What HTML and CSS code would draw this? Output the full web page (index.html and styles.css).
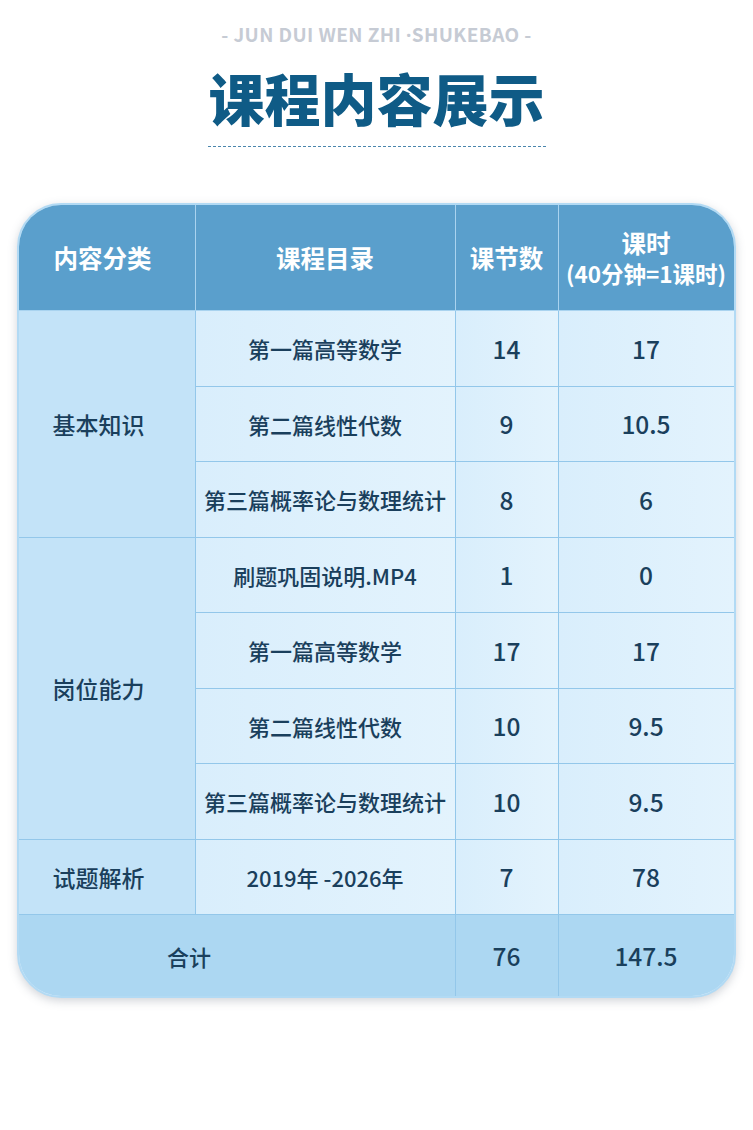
FILE: index.html
```html
<!DOCTYPE html>
<html lang="zh">
<head>
<meta charset="utf-8">
<link rel="stylesheet" href="styles.css">
</head>
<body>
<div class="page">
  <div class="eyebrow">- JUN DUI WEN ZHI <span class="dot">·</span>SHUKEBAO -</div>
  <h1 class="title">课程内容展示</h1>
  <div class="rule"></div>
  <div class="card">
    <div class="grid">
      <div class="hd c1">内容分类</div>
      <div class="hd c2">课程目录</div>
      <div class="hd c3">课节数</div>
      <div class="hd c4"><span>课时</span><span>(40分钟=1课时)</span></div>

      <div class="cat span3">基本知识</div>
      <div class="cell">第一篇高等数学</div><div class="cell num">14</div><div class="cell num last">17</div>
      <div class="cell">第二篇线性代数</div><div class="cell num">9</div><div class="cell num last">10.5</div>
      <div class="cell">第三篇概率论与数理统计</div><div class="cell num">8</div><div class="cell num last">6</div>

      <div class="cat span4">岗位能力</div>
      <div class="cell">刷题巩固说明.MP4</div><div class="cell num">1</div><div class="cell num last">0</div>
      <div class="cell">第一篇高等数学</div><div class="cell num">17</div><div class="cell num last">17</div>
      <div class="cell">第二篇线性代数</div><div class="cell num">10</div><div class="cell num last">9.5</div>
      <div class="cell">第三篇概率论与数理统计</div><div class="cell num">10</div><div class="cell num last">9.5</div>

      <div class="cat">试题解析</div>
      <div class="cell">2019年 -2026年</div><div class="cell num">7</div><div class="cell num last">78</div>

      <div class="tot span2">合计</div>
      <div class="tot num">76</div>
      <div class="tot num last">147.5</div>
    </div>
  </div>
</div>
</body>
</html>
```

FILE: styles.css
```css
* { box-sizing: border-box; }
html, body { margin: 0; padding: 0; background: #ffffff; }
body {
  font-family: "Noto Sans CJK SC", "Noto Sans", sans-serif;
  width: 753px;
  height: 1130px;
  overflow: hidden;
}
.page {
  display: flex;
  flex-direction: column;
  align-items: center;
  padding-top: 20px;
}
.eyebrow {
  font-family: "Noto Sans CJK SC", "Noto Sans", sans-serif;
  font-weight: 700;
  font-size: 19px;
  letter-spacing: 0.4px;
  color: #c6cbd4;
  line-height: 28px;
}
.eyebrow .dot { font-family: "Noto Sans", sans-serif; }
.title {
  margin: 12px 0 0;
  font-size: 56px;
  font-weight: 900;
  line-height: 72px;
  color: #0f5b86;
  letter-spacing: 0;
}
.rule {
  margin-top: 13px;
  width: 338px;
  border-top: 1.5px dashed #4a86ad;
}
.card {
  margin-top: 56px;
  width: 719px;
  margin-left: -1px;
  border: 2px solid #b2daf4;
  border-radius: 44px;
  overflow: hidden;
  box-shadow: 0 3px 10px rgba(90, 100, 120, 0.28);
  background: #dff0fc;
}
.grid {
  display: grid;
  grid-template-columns: 177px 260px 103px 175px;
  grid-template-rows: 106px repeat(8, 75.5px) 81px;
}
.grid > div {
  display: flex;
  align-items: center;
  justify-content: center;
  text-align: center;
  border-right: 1px solid #93c7ea;
  border-bottom: 1px solid #93c7ea;
  color: #1a3f5c;
  font-size: 22px;
  font-weight: 500;
}
.grid > .num { font-size: 24.5px; }
.grid > .last { border-right: none; }
.hd {
  background: #5a9fcc;
  color: #ffffff !important;
  font-weight: 700 !important;
  font-size: 24.5px !important;
  border-right-color: #a9d3ef !important;
  border-bottom-color: #a9d3ef !important;
}
.hd.c1 { padding-right: 8px; }
.hd.c4 {
  flex-direction: column;
  border-right: none;
  line-height: 30px;
}
.hd.c4 span:last-child { font-size: 22.5px; }
.cat {
  background: #c3e3f8;
  grid-column: 1;
  padding-right: 16px;
  font-size: 23px !important;
}
.span3 { grid-row: span 3; }
.span4 { grid-row: span 4; }
.cell {
  background: linear-gradient(90deg, #d9eefc, #e3f3fd);
}
.tot {
  background: #acd7f2;
  border-bottom: none !important;
}
.span2 { grid-column: span 2; padding-right: 95px; }
```
